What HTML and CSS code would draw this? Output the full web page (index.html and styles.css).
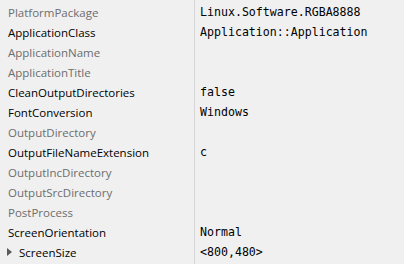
FILE: index.html
```html
<!DOCTYPE html>
<html lang="en">
<head>
  <meta charset="UTF-8">
  <title>Properties</title>
  <meta name="viewport" content="width=device-width,initial-scale=1">
  <link rel="stylesheet" href="styles.css">
</head>
<body>
  <div class="grid">
    <div class="row dim"><span class="name">PlatformPackage</span><span class="value">Linux.Software.RGBA8888</span></div>
    <div class="row"><span class="name">ApplicationClass</span><span class="value">Application::Application</span></div>
    <div class="row dim"><span class="name">ApplicationName</span><span class="value"></span></div>
    <div class="row dim"><span class="name">ApplicationTitle</span><span class="value"></span></div>
    <div class="row"><span class="name">CleanOutputDirectories</span><span class="value">false</span></div>
    <div class="row"><span class="name">FontConversion</span><span class="value">Windows</span></div>
    <div class="row dim"><span class="name">OutputDirectory</span><span class="value"></span></div>
    <div class="row"><span class="name">OutputFileNameExtension</span><span class="value">c</span></div>
    <div class="row dim"><span class="name">OutputIncDirectory</span><span class="value"></span></div>
    <div class="row dim"><span class="name">OutputSrcDirectory</span><span class="value"></span></div>
    <div class="row dim"><span class="name">PostProcess</span><span class="value"></span></div>
    <div class="row"><span class="name">ScreenOrientation</span><span class="value">Normal</span></div>
    <div class="row"><span class="name expander"><span class="arrow"></span>ScreenSize</span><span class="value">&lt;800,480&gt;</span></div>
  </div>
</body>
</html>
```

FILE: styles.css
```css
html, body { margin: 0; height: 100%; }
body {
  background: #f0f0f0;
  font-family: "Open Sans", "Noto Sans", sans-serif;
  font-size: 11.5px;
  color: #000;
}
/* name/value divider */
.grid { padding-top: 2px; min-height: 100%; box-sizing: border-box;
  background: linear-gradient(#d6d6d6, #d6d6d6) 194px 0 / 1px 100% no-repeat; }
.row { display: flex; height: 20px; align-items: center; }
.name { width: 186px; padding-left: 8px; white-space: nowrap; }
.value {
  padding-left: 6px;
  font-family: "DejaVu Sans Mono", monospace;
  font-size: 11.6px;
  white-space: pre;
}
.dim .name { color: #6d6d6d; }
.expander { display: flex; align-items: center; padding-left: 6px; width: 188px; }
.arrow {
  width: 0; height: 0; margin: 0 7px 0 1px;
  border-top: 4.5px solid transparent;
  border-bottom: 4.5px solid transparent;
  border-left: 5px solid #5a5a5a;
}
```
